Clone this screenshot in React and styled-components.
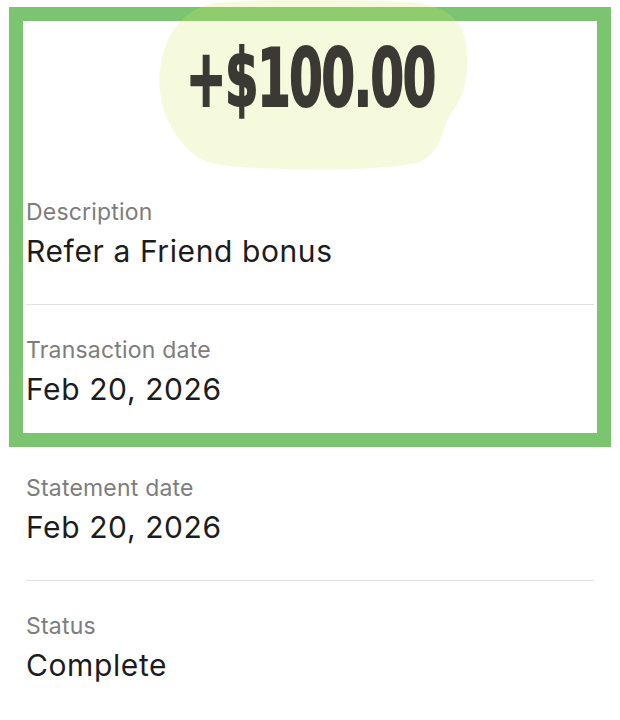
import React from 'react';
import styled, { createGlobalStyle } from 'styled-components';

const GlobalStyle = createGlobalStyle`
  html, body {
    margin: 0;
    padding: 0;
    background: #ffffff;
  }
  body {
    font-family: Inter, "Liberation Sans", sans-serif;
    -webkit-font-smoothing: antialiased;
  }
`;

const Page = styled.div`
  position: relative;
  width: 620px;
  min-height: 720px;
  padding: 0 26px;
  box-sizing: border-box;
  overflow: hidden;
`;

const AmountBlock = styled.div`
  position: relative;
  z-index: 3;
  height: 167px;
  padding-top: 38px;
  box-sizing: border-box;
  display: flex;
  justify-content: center;
`;

const Amount = styled.div`
  font-family: "DejaVu Sans Condensed", "Liberation Sans Narrow", sans-serif;
  font-weight: 700;
  font-size: 81px;
  line-height: 81px;
  letter-spacing: -2px;
  color: #3a3934;
  -webkit-text-stroke: 2px #3a3934;
  transform: scaleX(0.66);
  transform-origin: center;
  white-space: nowrap;
`;

const Row = styled.div`
  padding: 31px 0 36px;
  border-bottom: 1px solid #e2e2e2;
  display: flex;
  flex-direction: column;
  gap: 8px;

  &:last-child {
    border-bottom: none;
  }
`;

const Label = styled.div`
  font-size: 23px;
  line-height: 28px;
  color: #7d7d7d;
  letter-spacing: 0.2px;
`;

const Value = styled.div`
  font-size: 30px;
  line-height: 34px;
  color: #1c1c1c;
  letter-spacing: 0.6px;
`;

/* annotation overlays drawn on top of the screen */
const Highlight = styled.svg`
  position: absolute;
  left: 0;
  top: 0;
  z-index: 2;
  pointer-events: none;
`;

const Frame = styled.div`
  position: absolute;
  left: 9px;
  top: 7px;
  width: 602px;
  height: 440px;
  box-sizing: border-box;
  border: 14px solid #7bc470;
  z-index: 1;
  pointer-events: none;
`;

const rows = [
  { label: 'Description', value: 'Refer a Friend bonus' },
  { label: 'Transaction date', value: 'Feb 20, 2026' },
  { label: 'Statement date', value: 'Feb 20, 2026' },
  { label: 'Status', value: 'Complete' },
];

export default function App() {
  return (
    <>
      <GlobalStyle />
      <Page>
        <Frame />
        <Highlight width="620" height="180" viewBox="0 0 620 180">
          <path
            d="M215 3 C 270 -2, 360 0, 405 2 C 440 4, 460 14, 466 42 C 470 70, 466 95, 452 112 C 440 128, 446 148, 420 162 C 380 172, 270 172, 215 164 C 190 158, 178 140, 168 120 C 158 100, 156 70, 166 45 C 175 22, 190 8, 215 3 Z"
            fill="rgb(210,232,100)"
            fillOpacity="0.22"
          />
        </Highlight>
        <AmountBlock>
          <Amount>+$100.00</Amount>
        </AmountBlock>
        {rows.map((row) => (
          <Row key={row.label}>
            <Label>{row.label}</Label>
            <Value>{row.value}</Value>
          </Row>
        ))}
      </Page>
    </>
  );
}
